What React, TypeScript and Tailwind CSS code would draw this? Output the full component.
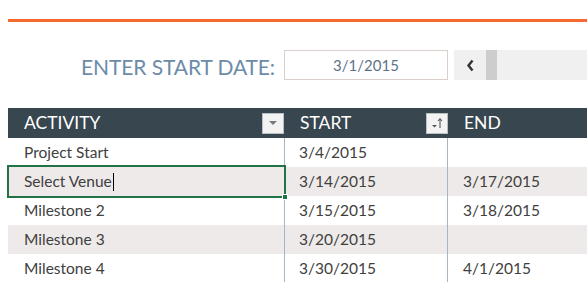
import React from "react";

const rows = [
  { a: "Project Start", s: "3/4/2015", e: "" },
  { a: "Select Venue", s: "3/14/2015", e: "3/17/2015" },
  { a: "Milestone 2", s: "3/15/2015", e: "3/18/2015" },
  { a: "Milestone 3", s: "3/20/2015", e: "" },
  { a: "Milestone 4", s: "3/30/2015", e: "4/1/2015" },
];

function DropBtn() {
  return (
    <div className="w-[22px] h-[21px] bg-[#f3f3f3] border border-[#b9bfc3] flex items-center justify-center">
      <svg width="10" height="6" viewBox="0 0 10 6">
        <path d="M1 1 L9 1 L5 5 Z" fill="#7a7a7a" />
      </svg>
    </div>
  );
}

function SortBtn() {
  return (
    <div className="w-[22px] h-[21px] bg-[#f3f3f3] border border-[#b9bfc3] flex items-center justify-center">
      <svg width="14" height="12" viewBox="0 0 14 12">
        <path d="M2 8 L7 8 L4.5 10.5 Z" fill="#555" />
        <path d="M10 11 L10 2" stroke="#444" strokeWidth="1" />
        <path d="M8 4 L10 1.5 L12 4" stroke="#444" strokeWidth="1" fill="none" />
      </svg>
    </div>
  );
}

export default function App() {
  const font = { fontFamily: "Lato, 'Open Sans', sans-serif" };
  return (
    <div className="w-[587px] h-[282px] bg-white overflow-hidden relative" style={font}>
      <div className="h-[19px]" />
      <div className="ml-[8px] h-[3px] bg-[#f7692f]" />
      <div className="h-[28px]" />
      <div className="flex items-center h-[30px]">
        <div className="w-[275px] text-right text-[21px] text-[#6b8ba8] tracking-[-0.1px] leading-none pt-[2px]">
          ENTER START DATE:
        </div>
        <div className="ml-[9px] w-[164px] h-[30px] border border-[#dccfcb] flex items-center justify-center text-[15px] text-[#5d7389]">
          3/1/2015
        </div>
        <div className="ml-[6px] flex-1 h-[30px] bg-[#f0f0f0] flex items-center">
          <div className="w-[32px] flex items-center justify-center">
            <svg width="9" height="13" viewBox="0 0 9 13">
              <path d="M6.5 1.5 L2.5 6.5 L6.5 11.5" stroke="#333" strokeWidth="2.4" fill="none" />
            </svg>
          </div>
          <div className="w-[11px] h-[30px] bg-[#cdcdcd]" />
        </div>
      </div>
      <div className="h-[28px]" />
      <div className="ml-[8px]">
        <div className="h-[30px] bg-[#37464f] flex items-center text-white text-[17.5px]">
          <div className="w-[277px] flex items-center justify-between pl-[16px] pr-[1px]">
            <span>ACTIVITY</span>
            <DropBtn />
          </div>
          <div className="w-[163px] flex items-center justify-between pl-[15px] pr-0">
            <span>START</span>
            <SortBtn />
          </div>
          <div className="flex-1 pl-[16px]">END</div>
        </div>
        {rows.map((r, i) => (
          <div
            key={i}
            className={`h-[29px] flex items-center text-[15.5px] text-[#404040] ${i % 2 === 1 ? "bg-[#eeeae9]" : "bg-white"}`}
          >
            <div className="w-[276px] pl-[16px] h-full flex items-center">
              {r.a}
              {i === 1 && <span className="inline-block ml-[1px] w-px h-[18px] bg-black" />}
            </div>
            <div className="w-px h-full bg-[#a8b6c1]" />
            <div className="w-[162px] pl-[14px] h-full flex items-center">{r.s}</div>
            <div className="w-px h-full bg-[#a8b6c1]" />
            <div className="flex-1 pl-[15px] h-full flex items-center">{r.e}</div>
          </div>
        ))}
      </div>
      <div className="absolute left-[7px] top-[165px] w-[279px] h-[33px] border-2 border-[#217346]">
        <div className="absolute right-[-4px] bottom-[-4px] w-[6px] h-[6px] bg-[#217346] border border-white" />
      </div>
    </div>
  );
}
